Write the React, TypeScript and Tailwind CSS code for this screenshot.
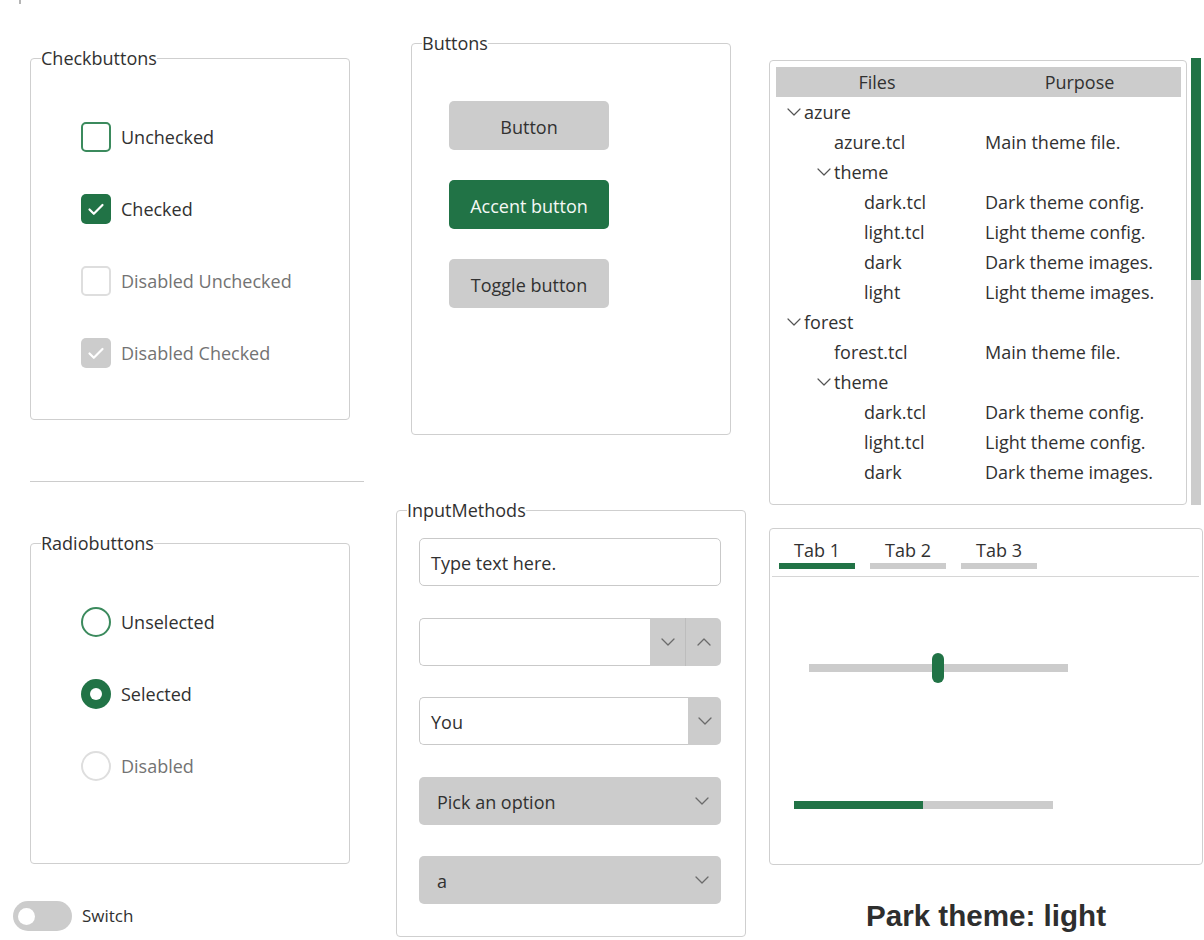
import React from 'react';

const GREEN = 'bg-[#217346]';

function Chevron({ up = false, className = '' }: { up?: boolean; className?: string }) {
    return (
        <svg width="14" height="8" viewBox="0 0 14 8" className={className} fill="none">
            <path
                d={up ? 'M1 7 L7 1 L13 7' : 'M1 1 L7 7 L13 1'}
                stroke="#6b6b6b"
                strokeWidth="1.3"
                strokeLinecap="round"
                strokeLinejoin="round"
            />
        </svg>
    );
}

function Check() {
    return (
        <svg width="30" height="30" viewBox="0 0 30 30" fill="none">
            <path d="M8.5 15.5 L12.8 19.8 L21.5 11" stroke="white" strokeWidth="2.2" strokeLinecap="round" strokeLinejoin="round" />
        </svg>
    );
}

function Frame({ label, className, children }: { label: string; className: string; children: React.ReactNode }) {
    return (
        <fieldset className={`border border-[#cfcfcf] rounded-[4px] ${className}`}>
            <legend className="ml-[10px] leading-[24px] text-[18px] text-[#313131]">{label}</legend>
            {children}
        </fieldset>
    );
}

function CheckRow({ kind, label }: { kind: 'off' | 'on' | 'dis-off' | 'dis-on'; label: string }) {
    const box =
        kind === 'off'
            ? 'border-2 border-[#3b8a5d] bg-white'
            : kind === 'on'
              ? `${GREEN}`
              : kind === 'dis-off'
                ? 'border-2 border-[#dedede] bg-white'
                : 'bg-[#cccccc]';
    const text = kind.startsWith('dis') ? 'text-[#737373]' : 'text-[#313131]';
    return (
        <div className="flex items-center h-[30px]">
            <div className={`w-[30px] h-[30px] rounded-[5px] flex items-center justify-center ${box}`}>
                {(kind === 'on' || kind === 'dis-on') && <Check />}
            </div>
            <span className={`ml-[10px] leading-[30px] ${text}`}>{label}</span>
        </div>
    );
}

function RadioRow({ kind, label }: { kind: 'off' | 'on' | 'dis'; label: string }) {
    return (
        <div className="flex items-center h-[30px]">
            {kind === 'on' ? (
                <div className={`w-[30px] h-[30px] rounded-full ${GREEN} flex items-center justify-center`}>
                    <div className="w-[12px] h-[12px] rounded-full bg-white" />
                </div>
            ) : (
                <div
                    className={`w-[30px] h-[30px] rounded-full border-2 bg-white ${
                        kind === 'off' ? 'border-[#3b8a5d]' : 'border-[#dedede]'
                    }`}
                />
            )}
            <span className={`ml-[10px] leading-[30px] ${kind === 'dis' ? 'text-[#737373]' : 'text-[#313131]'}`}>{label}</span>
        </div>
    );
}

const levelPad = ['pl-[11px]', 'pl-[41px]', 'pl-[71px]'];

const treeRows: { name: string; purpose?: string; level: number; branch?: boolean }[] = [
    { name: 'azure', level: 0, branch: true },
    { name: 'azure.tcl', purpose: 'Main theme file.', level: 1 },
    { name: 'theme', level: 1, branch: true },
    { name: 'dark.tcl', purpose: 'Dark theme config.', level: 2 },
    { name: 'light.tcl', purpose: 'Light theme config.', level: 2 },
    { name: 'dark', purpose: 'Dark theme images.', level: 2 },
    { name: 'light', purpose: 'Light theme images.', level: 2 },
    { name: 'forest', level: 0, branch: true },
    { name: 'forest.tcl', purpose: 'Main theme file.', level: 1 },
    { name: 'theme', level: 1, branch: true },
    { name: 'dark.tcl', purpose: 'Dark theme config.', level: 2 },
    { name: 'light.tcl', purpose: 'Light theme config.', level: 2 },
    { name: 'dark', purpose: 'Dark theme images.', level: 2 },
];

export default function App() {
    return (
        <div className="relative w-[1204px] h-[940px] bg-white flex font-['Open_Sans',sans-serif] text-[18px] text-[#313131] overflow-hidden">
            <div className="absolute left-[19px] top-0 w-[2px] h-[4px] bg-[#b5b5b5]" />

            {/* left column */}
            <div className="ml-[13px] w-[351px] flex flex-col">
                <Frame label="Checkbuttons" className="ml-[17px] w-[320px] h-[374px] mt-[46px]">
                    <div className="pl-[50px] pt-[52px] flex flex-col gap-[42px]">
                        <CheckRow kind="off" label="Unchecked" />
                        <CheckRow kind="on" label="Checked" />
                        <CheckRow kind="dis-off" label="Disabled Unchecked" />
                        <CheckRow kind="dis-on" label="Disabled Checked" />
                    </div>
                </Frame>

                <div className="ml-[17px] w-[334px] h-px bg-[#cccccc] mt-[61px]" />

                <Frame label="Radiobuttons" className="ml-[17px] w-[320px] h-[333px] mt-[49px]">
                    <div className="pl-[50px] pt-[52px] flex flex-col gap-[42px]">
                        <RadioRow kind="off" label="Unselected" />
                        <RadioRow kind="on" label="Selected" />
                        <RadioRow kind="dis" label="Disabled" />
                    </div>
                </Frame>

                <div className="mt-[37px] flex items-center h-[30px]">
                    <div className="w-[59px] h-[30px] rounded-full bg-[#cccccc] flex items-center pl-[5px]">
                        <div className="w-[17px] h-[17px] rounded-full bg-white" />
                    </div>
                    <span className="ml-[10px] text-[17px] leading-[30px]">Switch</span>
                </div>
            </div>

            {/* middle column */}
            <div className="ml-[32px] w-[349px] flex flex-col">
                <Frame label="Buttons" className="ml-[15px] w-[320px] h-[404px] mt-[31px]">
                    <div className="pl-[37px] pt-[46px] flex flex-col gap-[30px]">
                        <button className="w-[160px] h-[49px] pt-[3px] rounded-[5px] bg-[#cccccc] text-[#313131]">Button</button>
                        <button className={`w-[160px] h-[49px] pt-[3px] rounded-[5px] ${GREEN} text-[#f4f8f5]`}>Accent button</button>
                        <button className="w-[160px] h-[49px] pt-[3px] rounded-[5px] bg-[#cccccc] text-[#313131]">Toggle button</button>
                    </div>
                </Frame>

                <Frame label="InputMethods" className="w-[350px] h-[439px] mt-[63px]">
                    <div className="pl-[22px] pt-[16px] flex flex-col">
                        <div className="w-[302px] h-[48px] rounded-[5px] border border-[#c9c9c9] flex items-center pl-[11px] pt-[2px]">
                            Type text here.
                        </div>

                        <div className="mt-[32px] w-[302px] h-[48px] flex">
                            <div className="w-[231px] h-full border border-r-0 border-[#c9c9c9] rounded-l-[5px] bg-white" />
                            <div className="w-[36px] h-full bg-[#cccccc] border-r border-[#bdbdbd] flex items-center justify-center">
                                <Chevron />
                            </div>
                            <div className="w-[35px] h-full bg-[#cccccc] rounded-r-[5px] flex items-center justify-center">
                                <Chevron up />
                            </div>
                        </div>

                        <div className="mt-[31px] w-[302px] h-[48px] flex">
                            <div className="w-[269px] h-full border border-r-0 border-[#c9c9c9] rounded-l-[5px] bg-white flex items-center pl-[11px] pt-[2px]">
                                You
                            </div>
                            <div className="w-[33px] h-full bg-[#cccccc] rounded-r-[5px] flex items-center justify-center">
                                <Chevron />
                            </div>
                        </div>

                        <div className="mt-[32px] w-[302px] h-[48px] rounded-[5px] bg-[#cccccc] flex items-center justify-between pl-[18px] pr-[12px]">
                            <span className="pt-[2px]">Pick an option</span>
                            <Chevron />
                        </div>

                        <div className="mt-[31px] w-[302px] h-[48px] rounded-[5px] bg-[#cccccc] flex items-center justify-between pl-[18px] pr-[12px]">
                            <span className="pt-[2px]">a</span>
                            <Chevron />
                        </div>
                    </div>
                </Frame>
            </div>

            {/* right column */}
            <div className="ml-[24px] w-[435px] flex flex-col">
                <div className="mt-[58px] flex items-start">
                    <div className="mt-[2px] w-[418px] h-[445px] border border-[#cfcfcf] rounded-[4px] pt-[6px] pl-[6px] pr-[5px] overflow-hidden">
                        <div className="flex h-[30px] bg-[#cccccc]">
                            <div className="w-[202px] text-center leading-[30px]">Files</div>
                            <div className="flex-1 text-center leading-[30px]">Purpose</div>
                        </div>
                        {treeRows.map((r, i) => (
                            <div key={i} className="flex h-[30px] items-center">
                                <div className={`w-[202px] flex items-center ${levelPad[r.level]}`}>
                                    {r.branch ? (
                                        <div className="w-[17px] h-[30px] flex items-start pt-[11px]">
                                            <svg width="14" height="8" viewBox="0 0 14 8" fill="none">
                                                <path d="M1 1 L7 7 L13 1" stroke="#555555" strokeWidth="1.2" strokeLinecap="round" strokeLinejoin="round" />
                                            </svg>
                                        </div>
                                    ) : (
                                        <div className="w-[17px]" />
                                    )}
                                    <span className="leading-[30px] whitespace-nowrap">{r.name}</span>
                                </div>
                                <div className="pl-[7px] leading-[30px] whitespace-nowrap">{r.purpose ?? ''}</div>
                            </div>
                        ))}
                    </div>
                    <div className="ml-[4px] w-[10px] h-[447px] bg-[#cccccc] flex flex-col">
                        <div className={`h-[222px] ${GREEN}`} />
                    </div>
                </div>

                <div className="mt-[23px] w-[434px] h-[337px] border border-[#cfcfcf] rounded-[4px] flex flex-col">
                    <div className="pl-[9px] pt-[9px] flex gap-[15px]">
                        {['Tab 1', 'Tab 2', 'Tab 3'].map((t, i) => (
                            <div key={t} className="w-[76px] flex flex-col items-center">
                                <span className="leading-[24px]">{t}</span>
                                <div className={`mt-[1px] w-full h-[6px] ${i === 0 ? GREEN : 'bg-[#cccccc]'}`} />
                            </div>
                        ))}
                    </div>
                    <div className="mt-[7px] ml-[2px] mr-[3px] h-px bg-[#d6d6d6]" />

                    <div className="mt-[76px] ml-[39px] w-[259px] h-[30px] relative flex items-center">
                        <div className="w-full h-[8px] bg-[#cccccc]" />
                        <div className={`absolute left-[123px] top-0 w-[12px] h-[30px] rounded-full ${GREEN}`} />
                    </div>

                    <div className="mt-[118px] ml-[24px] w-[259px] h-[8px] bg-[#cccccc] flex">
                        <div className={`w-[129px] h-full ${GREEN}`} />
                    </div>
                </div>

                <div className="mt-[33px] w-[434px] text-center font-['Liberation_Sans',Arial,sans-serif] font-bold text-[29.6px] leading-[36px] text-[#2e2e2e]">
                    Park theme: light
                </div>
            </div>
        </div>
    );
}
